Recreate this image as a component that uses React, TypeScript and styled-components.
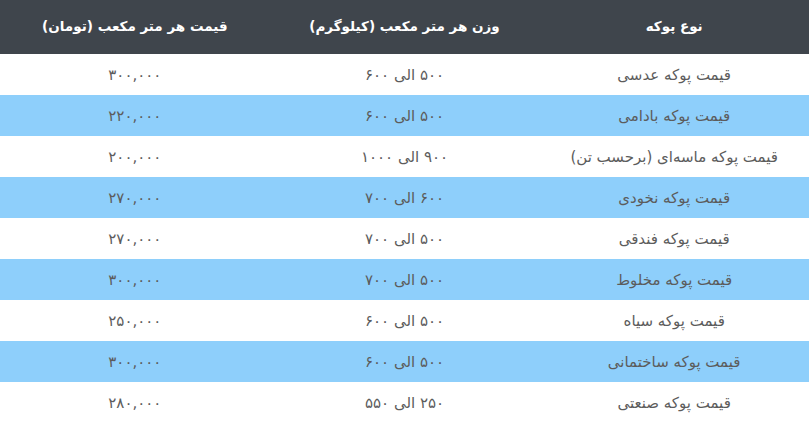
import React from "react"
import styled, { createGlobalStyle } from "styled-components"

const GlobalStyle = createGlobalStyle`
  html, body {
    margin: 0;
    padding: 0;
    background: #ffffff;
  }
  body {
    font-family: "DejaVu Sans", "Noto Sans", sans-serif;
  }
`

const rows = [
  ["قیمت پوکه عدسی", "۵۰۰ الی ۶۰۰", "۳۰۰,۰۰۰"],
  ["قیمت پوکه بادامی", "۵۰۰ الی ۶۰۰", "۲۲۰,۰۰۰"],
  ["قیمت پوکه ماسه‌ای (برحسب تن)", "۹۰۰ الی ۱۰۰۰", "۲۰۰,۰۰۰"],
  ["قیمت پوکه نخودی", "۶۰۰ الی ۷۰۰", "۲۷۰,۰۰۰"],
  ["قیمت پوکه فندقی", "۵۰۰ الی ۷۰۰", "۲۷۰,۰۰۰"],
  ["قیمت پوکه مخلوط", "۵۰۰ الی ۷۰۰", "۳۰۰,۰۰۰"],
  ["قیمت پوکه سیاه", "۵۰۰ الی ۶۰۰", "۲۵۰,۰۰۰"],
  ["قیمت پوکه ساختمانی", "۵۰۰ الی ۶۰۰", "۳۰۰,۰۰۰"],
  ["قیمت پوکه صنعتی", "۲۵۰ الی ۵۵۰", "۲۸۰,۰۰۰"],
]

function App() {
  return (
    <>
      <GlobalStyle />
      <Table>
        <thead>
          <tr>
            <HeadCell>نوع پوکه</HeadCell>
            <HeadCell>وزن هر متر مکعب (کیلوگرم)</HeadCell>
            <HeadCell>قیمت هر متر مکعب (تومان)</HeadCell>
          </tr>
        </thead>
        <tbody>
          {rows.map((r, i) => (
            <Row key={i} $striped={i % 2 === 1}>
              {r.map((c, j) => (
                <Cell key={j}>{c}</Cell>
              ))}
            </Row>
          ))}
        </tbody>
      </Table>
    </>
  )
}

const Table = styled.table`
  direction: rtl;
  width: 100%;
  border-collapse: collapse;
  table-layout: fixed;
`

const HeadCell = styled.th`
  height: 54px;
  box-sizing: border-box;
  padding: 0 8px 3px;
  background: #3f454c;
  color: #ffffff;
  font-size: 13.5px;
  font-weight: bold;
  text-align: center;
  vertical-align: middle;
`

const Row = styled.tr<{ $striped: boolean }>`
  background: ${(p) => (p.$striped ? "#8ecffb" : "#ffffff")};
`

const Cell = styled.td`
  height: 41px;
  box-sizing: border-box;
  padding: 0 8px;
  color: #5c5c5c;
  font-size: 15px;
  text-align: center;
  vertical-align: middle;
`

export default App
